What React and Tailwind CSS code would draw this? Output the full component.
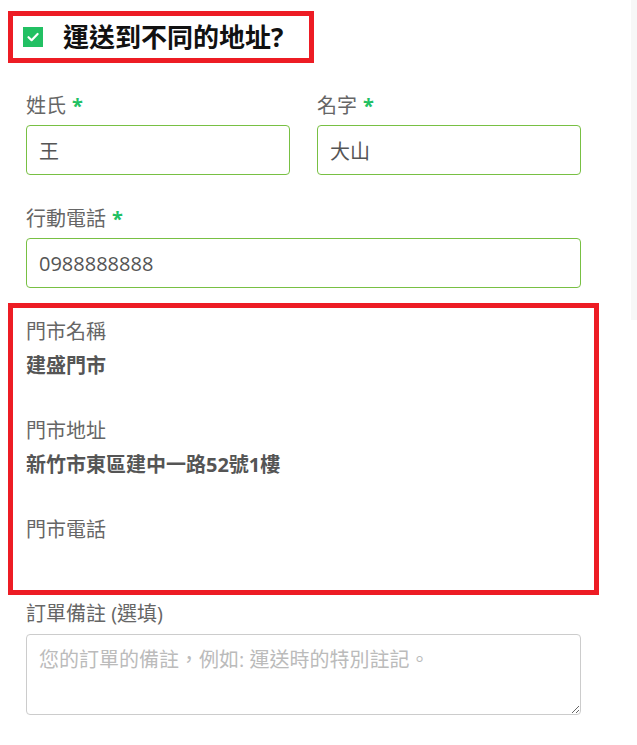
import React from "react";

const font = { fontFamily: '"Open Sans","Noto Sans CJK TC",sans-serif' };

function Label({ children, required }) {
  return (
    <div className="text-[20px] leading-[30px] text-[#666]">
      {children}
      {required && <span className="ml-[6px] font-bold text-[#22c063]">*</span>}
    </div>
  );
}

function Field({ label, value }) {
  return (
    <div className="flex flex-col">
      <Label required>{label}</Label>
      <input
        defaultValue={value}
        className="mt-[4px] h-[50px] w-full rounded-[4px] border border-[#78c043] bg-white px-[12px] text-[20px] text-[#555] outline-none"
        style={font}
      />
    </div>
  );
}

function StoreItem({ label, value, last }) {
  return (
    <div className={last ? "" : "mb-[35px]"}>
      <div className="text-[20px] leading-[30px] text-[#666]">{label}</div>
      <div className="mt-[4px] h-[30px] text-[20px] font-bold leading-[30px] text-[#555]">{value}</div>
    </div>
  );
}

export default function App() {
  return (
    <div className="relative flex min-h-[745px] w-[637px] bg-white" style={font}>
      <div className="w-[631px]">
        <div className="ml-[8px] mt-[11px] flex h-[52px] w-[306px] items-center border-[5px] border-[#ed1c24] pl-[10px]">
          <div className="flex h-[20px] w-[20px] items-center justify-center bg-[#22c063]">
            <svg width="14" height="14" viewBox="0 0 14 14">
              <polyline points="2.5,7.2 5.6,10.2 11.6,4" fill="none" stroke="white" strokeWidth="2.2" strokeLinecap="round" strokeLinejoin="round" />
            </svg>
          </div>
          <div className="ml-[20px] text-[26px] font-bold leading-[32px] text-[#111]">運送到不同的地址?</div>
        </div>

        <div className="mt-[28px] ml-[26px] w-[555px]">
          <div className="grid grid-cols-2 gap-x-[27px]">
            <Field label="姓氏" value="王" />
            <Field label="名字" value="大山" />
          </div>
          <div className="mt-[29px]">
            <Field label="行動電話" value="0988888888" />
          </div>
        </div>

        <div className="ml-[8px] mt-[15px] w-[591px] border-[5px] border-[#ed1c24] px-[13px] pb-[11px] pt-[9px]">
          <StoreItem label="門市名稱" value="建盛門市" />
          <StoreItem label="門市地址" value="新竹市東區建中一路52號1樓" />
          <StoreItem label="門市電話" value="" last />
        </div>

        <div className="ml-[26px] mt-[4px] w-[555px]">
          <div className="text-[20px] leading-[30px] text-[#666]">訂單備註 (選填)</div>
          <textarea
            placeholder="您的訂單的備註，例如: 運送時的特別註記。"
            className="mt-[5px] block h-[81px] w-full rounded-[4px] border border-[#ccc] bg-white px-[12px] py-[10px] text-[20px] leading-[30px] text-[#555] outline-none placeholder:text-[#bbb]"
            style={font}
          />
        </div>
      </div>
      <div className="w-[6px]">
        <div className="h-[320px] w-full bg-[#f7f7f7]" />
      </div>
    </div>
  );
}
